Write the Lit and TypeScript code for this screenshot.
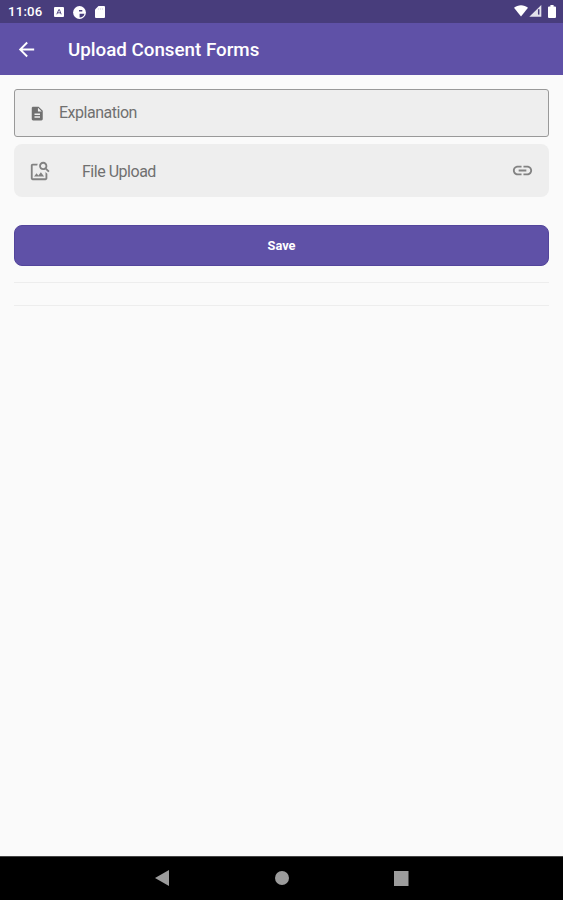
import { LitElement, html, css } from "lit";
import { customElement } from "lit/decorators.js";

@customElement("app-root")
export class AppRoot extends LitElement {
  static styles = css`
    :host {
      display: flex;
      flex-direction: column;
      height: 900px;
      background: #fafafa;
      font-family: Roboto, "Liberation Sans", sans-serif;
      color: #707070;
    }
    svg {
      display: block;
      flex: none;
      fill: currentColor;
    }
    .status {
      display: flex;
      align-items: center;
      height: 23px;
      padding: 0 7px 0 8px;
      background: #483d7c;
      color: #fff;
      box-sizing: border-box;
    }
    .clock {
      width: 46px;
      font-size: 13.2px;
      font-weight: 500;
      letter-spacing: 0.2px;
      line-height: 23px;
    }
    .notices {
      display: flex;
      align-items: center;
      gap: 9px;
      flex: 1;
      padding-top: 1px;
    }
    .signals {
      display: flex;
      align-items: center;
      padding-bottom: 1px;
    }
    .bar {
      display: flex;
      align-items: center;
      height: 52px;
      padding-left: 15px;
      background: #5f51a7;
      color: #fff;
    }
    .title {
      margin: 2px 0 0 30px;
      font-size: 18.75px;
      font-weight: 500;
      line-height: 24px;
      white-space: nowrap;
    }
    main {
      flex: 1;
      display: flex;
      flex-direction: column;
      padding: 14px 14px 0 14px;
    }
    .field,
    .upload {
      display: flex;
      align-items: center;
      box-sizing: border-box;
      background: #eee;
      font-size: 16px;
      letter-spacing: -0.48px;
    }
    .field {
      height: 48px;
      border: 1px solid #999;
      border-radius: 3px;
      padding-left: 14px;
    }
    .field span {
      margin-left: 13.5px;
      padding-bottom: 2px;
    }
    .upload {
      height: 53px;
      margin-top: 7px;
      border-radius: 8px;
      padding: 0 15px;
    }
    .upload span {
      flex: 1;
      margin-left: 31px;
      padding-top: 1px;
    }
    .outline {
      opacity: 0.85;
    }
    .save {
      height: 41px;
      margin: 28px 0 0;
      padding: 0;
      border: 1px solid #53459b;
      border-radius: 8px;
      background: #5f51a7;
      color: #fff;
      font: 700 12.8px Roboto, "Liberation Sans", sans-serif;
    }
    .rule {
      height: 1px;
      margin-top: 16px;
      background: #ededed;
    }
    .rule + .rule {
      margin-top: 22px;
    }
    .nav {
      display: flex;
      justify-content: center;
      align-items: center;
      gap: 105px;
      height: 44px;
      background: #000;
      color: #9c9c9c;
      box-sizing: border-box;
      padding-bottom: 1px;
      border-top: 1px solid #444;
    }
  `;

  render() {
    return html`
      <div class="status">
        <span class="clock">11:06</span>
        <div class="notices">
          <svg width="10" height="10" viewBox="0 0 10 10">
            <rect width="10" height="10" rx="1" />
            <path d="M2.8 7.300 4.800 2.600h.6l1.800 4.700M3.700 5.800h2.800" fill="none" stroke="#483d7c" stroke-width=".9" />
          </svg>
          <svg width="13" height="13" viewBox="0 0 13 13">
            <circle cx="6.500" cy="6.500" r="6.400" />
            <path d="M6.600 7.700h4.900a5.200 5.200 0 0 1-4.900 3.900zM6 4h3.300v1.400H6z" fill="#483d7c" />
          </svg>
          <svg width="10" height="12" viewBox="0 0 10 12">
            <path d="M3.500 0H9a1 1 0 0 1 1 1v10a1 1 0 0 1-1 1H1a1 1 0 0 1-1-1V3.500z" />
            <path d="M3.400 2v2M5.400 2v2M7.400 2v2" stroke="#d5d1e6" stroke-width=".7" />
          </svg>
        </div>
        <div class="signals">
          <svg width="35" height="14" viewBox="0 0 35 14">
            <path d="M1 3.800C4.800.3 11.200.3 15 3.800L8 12.600z" />
            <path d="M16.300 12.800 28.300 1v11.800z" opacity=".85" />
            <path d="M25.700 5.200v5.400" stroke="#483d7c" stroke-width="1.500" />
          </svg>
          <svg width="8" height="13" viewBox="0 0 8 13">
            <path d="M2.400 0h3.200v1.400H7a1 1 0 0 1 1 1V12a1 1 0 0 1-1 1H1a1 1 0 0 1-1-1V2.400a1 1 0 0 1 1-1h1.400z" />
          </svg>
        </div>
      </div>
      <header class="bar">
        <svg width="23" height="23" viewBox="0 0 24 24">
          <path d="M20 11H7.830l5.590-5.590L12 4l-8 8 8 8 1.410-1.410L7.830 13H20z" />
        </svg>
        <h1 class="title">Upload Consent Forms</h1>
      </header>
      <main>
        <div class="field">
          <svg width="16.5" height="17" viewBox="0 0 24 24">
            <path d="M14 2H6c-1.100 0-1.990.9-1.990 2L4 20c0 1.100.89 2 1.990 2H18c1.100 0 2-.9 2-2V8zm2 16H8v-2h8zm0-4H8v-2h8zm-3-5V3.500L18.500 9z" />
          </svg>
          <span>Explanation</span>
        </div>
        <div class="upload">
          <svg class="outline" width="22" height="22" viewBox="0 0 24 24">
            <path d="M18 13v7H4V6h5.020c.05-.71.22-1.380.48-2H4c-1.100 0-2 .9-2 2v14c0 1.100.9 2 2 2h14c1.100 0 2-.9 2-2v-5zm-1.500 5h-11l2.750-3.530 1.960 2.360 2.750-3.540zm2.800-9.110c.44-.7.7-1.510.7-2.390C20 4.010 17.990 2 15.500 2S11 4.010 11 6.500s2.010 4.500 4.490 4.500c.88 0 1.700-.26 2.390-.7L21 13.420 22.420 12zM15.500 9C14.120 9 13 7.880 13 6.500S14.120 4 15.500 4 18 5.120 18 6.500 16.880 9 15.500 9z" />
          </svg>
          <span>File Upload</span>
          <svg class="outline" width="23" height="23" viewBox="0 0 24 24">
            <path d="M3.900 12c0-1.710 1.390-3.100 3.100-3.100h4V7H7c-2.760 0-5 2.240-5 5s2.240 5 5 5h4v-1.900H7c-1.710 0-3.100-1.390-3.100-3.100zM8 13h8v-2H8zm9-6h-4v1.900h4c1.710 0 3.100 1.390 3.100 3.100s-1.390 3.100-3.100 3.100h-4V17h4c2.760 0 5-2.240 5-5s-2.240-5-5-5z" />
          </svg>
        </div>
        <button class="save">Save</button>
        <div class="rule"></div>
        <div class="rule"></div>
      </main>
      <nav class="nav">
        <svg width="15" height="16" viewBox="0 0 15 16"><path d="M0 8 14 0v16z" /></svg>
        <svg width="14" height="14" viewBox="0 0 14 14"><circle cx="7" cy="7" r="7" /></svg>
        <svg width="15" height="15" viewBox="0 0 15 15"><path d="M0 0h14.500v15H0z" /></svg>
      </nav>
    `;
  }
}
